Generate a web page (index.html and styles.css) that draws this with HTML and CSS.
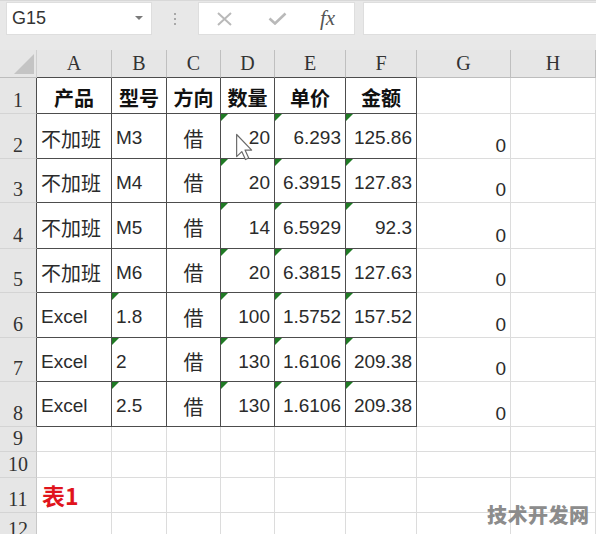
FILE: index.html
```html
<!DOCTYPE html>
<html lang="zh">
<head>
<meta charset="utf-8">
<title>Sheet</title>
<link rel="stylesheet" href="styles.css">
</head>
<body>
<div class="app">
  <div class="toolbar">
    <div class="namebox"><span class="nb-text">G15</span><span class="caret"></span></div>
    <div class="grip"><i></i><i></i><i></i></div>
    <div class="fbtns">
      <svg class="ico-x" width="17" height="14" viewBox="0 0 17 14"><path d="M2 1 L15 13 M15 1 L2 13" stroke="#b9b9b9" stroke-width="2" fill="none"/></svg>
      <svg class="ico-ok" width="19" height="13" viewBox="0 0 19 13"><path d="M1.5 6.5 L7 11.5 L17.5 1.5" stroke="#b9b9b9" stroke-width="2.6" fill="none"/></svg>
      <span class="fx">fx</span>
    </div>
    <div class="finput"></div>
  </div>

  <div class="sheet">
    <div class="ch corner"><span class="tri"></span></div>
    <div class="ch dk">A</div><div class="ch dk">B</div><div class="ch dk">C</div><div class="ch dk">D</div><div class="ch dk">E</div><div class="ch dk">F</div><div class="ch">G</div><div class="ch">H</div>

    <div class="rh dk">1</div>
    <div class="c t m b zh">产品</div><div class="c t m b zh">型号</div><div class="c t m b zh">方向</div><div class="c t m b zh">数量</div><div class="c t m b zh">单价</div><div class="c t m b zh">金额</div><div class="c"></div><div class="c"></div>

    <div class="rh dk">2</div>
    <div class="c t zh">不加班</div><div class="c t">M3</div><div class="c t m zh">借</div>
    <div class="c t r flag">20<svg class="cursor" width="18" height="28" viewBox="0 0 12 19"><path d="M1 1 L1 16 L4.5 12.6 L7 18 L9.2 17 L6.7 11.6 L11.2 11.6 Z" fill="#fff" stroke="#6a6a6a" stroke-width="0.8" stroke-linejoin="round"/></svg></div>
    <div class="c t r flag">6.293</div><div class="c t r flag">125.86</div><div class="c g">0</div><div class="c"></div>

    <div class="rh dk">3</div>
    <div class="c t zh">不加班</div><div class="c t">M4</div><div class="c t m zh">借</div><div class="c t r flag">20</div><div class="c t r flag">6.3915</div><div class="c t r flag">127.83</div><div class="c g">0</div><div class="c"></div>

    <div class="rh dk">4</div>
    <div class="c t zh">不加班</div><div class="c t">M5</div><div class="c t m zh">借</div><div class="c t r flag">14</div><div class="c t r flag">6.5929</div><div class="c t r flag">92.3</div><div class="c g">0</div><div class="c"></div>

    <div class="rh dk">5</div>
    <div class="c t zh">不加班</div><div class="c t">M6</div><div class="c t m zh">借</div><div class="c t r flag">20</div><div class="c t r flag">6.3815</div><div class="c t r flag">127.63</div><div class="c g">0</div><div class="c"></div>

    <div class="rh dk">6</div>
    <div class="c t">Excel</div><div class="c t flag">1.8</div><div class="c t m zh">借</div><div class="c t r flag">100</div><div class="c t r flag">1.5752</div><div class="c t r flag">157.52</div><div class="c g">0</div><div class="c"></div>

    <div class="rh dk">7</div>
    <div class="c t">Excel</div><div class="c t flag">2</div><div class="c t m zh">借</div><div class="c t r flag">130</div><div class="c t r flag">1.6106</div><div class="c t r flag">209.38</div><div class="c g">0</div><div class="c"></div>

    <div class="rh dk">8</div>
    <div class="c t">Excel</div><div class="c t flag">2.5</div><div class="c t m zh">借</div><div class="c t r flag">130</div><div class="c t r flag">1.6106</div><div class="c t r flag">209.38</div><div class="c g">0</div><div class="c"></div>

    <div class="rh">9</div>
    <div class="c"></div><div class="c"></div><div class="c"></div><div class="c"></div><div class="c"></div><div class="c"></div><div class="c"></div><div class="c"></div>

    <div class="rh">10</div>
    <div class="c"></div><div class="c"></div><div class="c"></div><div class="c"></div><div class="c"></div><div class="c"></div><div class="c"></div><div class="c"></div>

    <div class="rh">11</div>
    <div class="c label">表1</div><div class="c"></div><div class="c"></div><div class="c"></div><div class="c"></div><div class="c"></div><div class="c"></div><div class="c"></div>

    <div class="rh">12</div>
    <div class="c"></div><div class="c"></div><div class="c"></div><div class="c"></div><div class="c"></div><div class="c"></div><div class="c"></div><div class="c"></div>
  </div>

  <div class="watermark">技术开发网</div>
</div>
</body>
</html>
```

FILE: styles.css
```css
* { box-sizing: border-box; }
html, body { margin: 0; padding: 0; }
body {
  width: 596px;
  height: 534px;
  overflow: hidden;
  background: #fff;
  font-family: "Liberation Sans", "Noto Sans CJK SC", Arial, sans-serif;
  color: #2b2b2b;
}
.app { position: relative; width: 596px; height: 534px; overflow: hidden; }

/* toolbar */
.toolbar {
  height: 50px;
  background: #e8e8e8;
  border-top: 1px solid #d8d8d8;
  padding-top: 1px;
  display: flex;
  align-items: flex-start;
}
.namebox {
  margin-left: 6px;
  width: 146px;
  height: 33px;
  background: #fff;
  border: 1px solid #dedede;
  display: flex;
  align-items: center;
  justify-content: space-between;
  padding: 0 8px 0 5px;
}
.nb-text { font-size: 18px; color: #333; }
.caret {
  width: 0; height: 0;
  border-left: 4px solid transparent;
  border-right: 4px solid transparent;
  border-top: 4px solid #7a7a7a;
  margin-top: -2px;
}
.grip {
  width: 46px;
  height: 33px;
  display: flex;
  flex-direction: column;
  align-items: center;
  justify-content: center;
  gap: 3px;
}
.grip i { display: block; width: 2px; height: 2px; background: #a8a8a8; }
.fbtns {
  width: 157px;
  height: 33px;
  background: #fff;
  border: 1px solid #dedede;
  display: flex;
  align-items: center;
  padding-left: 17px;
}
.ico-x { margin-top: 1px; }
.ico-ok { margin-left: 35px; }
.fx {
  margin-left: 33px;
  font-family: "Liberation Serif", serif;
  font-style: italic;
  font-size: 21px;
  color: #555;
  margin-top: -1px;
}
.finput {
  margin-left: 8px;
  flex: 1;
  height: 33px;
  background: #fff;
  border: 1px solid #dedede;
  border-right: none;
}

/* sheet grid */
.sheet {
  display: grid;
  grid-template-columns: 37px 75px 55px 54px 54px 71px 71px 94px 85px;
  grid-template-rows: 28px 36px 45px 44px 46px 44px 45px 44px 45px 25px 26px 35px 30px;
}
.ch {
  background: #e6e6e6;
  border-right: 1px solid #bfbfbf;
  border-bottom: 1px solid #bdbdbd;
  display: flex;
  align-items: center;
  justify-content: center;
  font-family: "Liberation Serif", serif;
  font-size: 20px;
  color: #333;
}
.ch.dk { border-bottom-color: #4d4d4d; }
.corner {
  align-items: flex-end;
  justify-content: flex-end;
  padding: 0 2px 3px 0;
  border-right-color: #cfcfcf;
}
.tri {
  width: 0; height: 0;
  border-left: 20px solid transparent;
  border-bottom: 20px solid #c4c4c4;
}
.rh {
  background: #e6e6e6;
  border-right: 1px solid #c8c8c8;
  border-bottom: 1px solid #d4d4d4;
  display: flex;
  align-items: flex-end;
  justify-content: center;
  font-family: "Liberation Serif", serif;
  font-size: 20px;
  line-height: 1.1;
  padding-bottom: 2px;
  color: #333;
}
.rh.dk { border-right-color: #4d4d4d; }

.c {
  position: relative;
  border-right: 1px solid #dcdcdc;
  border-bottom: 1px solid #dcdcdc;
  display: flex;
  align-items: center;
  padding: 4px 4px 0 4px;
  font-size: 19px;
  white-space: nowrap;
}
.c.t { border-right-color: #4d4d4d; border-bottom-color: #4d4d4d; }
.c.zh { font-family: "Noto Sans CJK SC", sans-serif; font-size: 20px; }
.c.m { justify-content: center; }
.c.r { justify-content: flex-end; }
.c.b { font-weight: 700; color: #111; }
.c.g {
  justify-content: flex-end;
  align-items: flex-end;
  padding: 0 4px 1px 4px;
}
.flag::before {
  content: "";
  position: absolute;
  top: 0;
  left: 0;
  border-top: 7px solid #1f7a24;
  border-right: 7px solid transparent;
}
.cursor {
  position: absolute;
  left: 14px;
  top: 19px;
}
.label {
  font-family: "Noto Sans CJK SC", sans-serif;
  font-weight: 700;
  font-size: 23px;
  color: #e0141c;
  padding: 0 0 0 5px;
}

.watermark {
  position: absolute;
  left: 487px;
  top: 500px;
  font-family: "Noto Sans CJK SC", sans-serif;
  font-weight: 900;
  font-size: 20px;
  letter-spacing: 0.5px;
  color: #8c8c8c;
}
```
